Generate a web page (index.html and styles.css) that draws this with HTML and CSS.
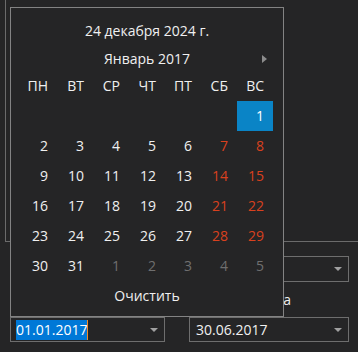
FILE: index.html
```html
<!DOCTYPE html>
<html>
  <head>
    <link rel="stylesheet" href="styles.css">
  </head>
  <body>
    <div class="group"></div>

    <div class="form">
      <div class="combo">
        <span class="arrow"></span>
      </div>

      <div class="fields">
        <label class="caption">Начальная дата</label>
        <label class="caption end">Конечная дата</label>
        <div class="date-box">
          <span class="value selected">01.01.2017</span><span class="caret"></span>
          <span class="arrow"></span>
        </div>
        <div class="date-box">
          <span class="value">30.06.2017</span>
          <span class="arrow"></span>
        </div>
      </div>
    </div>

    <!-- выпадающий календарь -->
    <div class="calendar">
      <div class="today">24 декабря 2024 г.</div>
      <div class="month">
        <span>Январь 2017</span>
        <span class="next"></span>
      </div>

      <div id="grid" class="grid"></div>

      <div class="clear">Очистить</div>
    </div>

    <script>
      const days = ["ПН", "ВТ", "СР", "ЧТ", "ПТ", "СБ", "ВС"];
      const grid = document.getElementById("grid");

      days.forEach((d) => {
        const cell = document.createElement("div");
        cell.className = "cell head";
        cell.innerText = d;
        grid.appendChild(cell);
      });

      // январь 2017 начинается с воскресенья
      for (let i = 0; i < 6; i++) {
        const cell = document.createElement("div");
        cell.className = "cell";
        grid.appendChild(cell);
      }

      for (let n = 1; n <= 36; n++) {
        const cell = document.createElement("div");
        const col = (n + 5) % 7; // 0 = ПН
        cell.className = "cell";
        if (n > 31) {
          cell.classList.add("other");
          cell.innerText = n - 31;
        } else {
          cell.innerText = n;
          if (col === 5 || col === 6) cell.classList.add("weekend");
        }
        if (n === 1) {
          cell.classList.remove("weekend");
          cell.classList.add("active");
        }
        grid.appendChild(cell);
      }
    </script>
  </body>
</html>
```

FILE: styles.css
```css
body {
  margin: 0;
  background-color: #252526;
  color: #f0f0f0;
  font-family: "Open Sans", "Noto Sans", sans-serif;
  font-size: 14px;
  line-height: 20px;
  position: relative;
  height: 352px;
  overflow: hidden;
}
.group {
  margin-left: 5px;
  height: 241px;
  border-left: 1px solid #6b6b6b;
  border-bottom: 1px solid #6b6b6b;
}
.form {
  padding: 14px 9px 0 10px;
}
.combo {
  position: relative;
  height: 26px;
  border: 1px solid #6e6e6e;
  box-sizing: border-box;
}
.fields {
  display: grid;
  grid-template-columns: 155px 160px;
  column-gap: 24px;
  margin-top: 8px;
}
.caption {
  height: 20px;
  margin-bottom: 7px;
  white-space: nowrap;
}
.caption.end {
  text-align: right;
  padding-right: 58px;
}
.date-box {
  position: relative;
  display: flex;
  align-items: center;
  height: 25px;
  border: 1px solid #6e6e6e;
  box-sizing: border-box;
  padding-left: 5px;
}
.date-box + .date-box {
  padding-left: 6px;
}
.value {
  line-height: 20px;
}
.selected {
  background-color: #0078d7;
  color: #fff;
}
.caret {
  width: 1px;
  height: 20px;
  background-color: #f28c28;
}
.arrow {
  position: absolute;
  right: 6px;
  top: 50%;
  margin-top: -2px;
  width: 0;
  height: 0;
  border-left: 4px solid transparent;
  border-right: 4px solid transparent;
  border-top: 4px solid #a0a0a0;
}
.calendar {
  position: absolute;
  left: 10px;
  top: 7px;
  width: 274px;
  height: 310px;
  box-sizing: border-box;
  border: 1px solid #838383;
  background-color: #252526;
  padding: 13px 10px 0 10px;
}
.today {
  text-align: center;
  height: 20px;
}
.month {
  position: relative;
  text-align: center;
  margin-top: 8px;
  height: 20px;
}
.next {
  position: absolute;
  right: 6px;
  top: 6px;
  width: 0;
  height: 0;
  border-top: 4px solid transparent;
  border-bottom: 4px solid transparent;
  border-left: 5px solid #8c8c8c;
}
.grid {
  display: grid;
  grid-template-columns: repeat(7, 36px);
  grid-auto-rows: 30px;
  margin-top: 2px;
}
.cell {
  display: flex;
  align-items: center;
  justify-content: flex-end;
  padding-right: 9px;
  color: #f0f0f0;
}
.cell.weekend {
  color: #d9411e;
}
.cell.other {
  color: #6f6f6f;
}
.cell.active {
  background-color: #0a84c6;
  color: #fff;
}
.clear {
  text-align: center;
  margin-top: 5px;
}
```
